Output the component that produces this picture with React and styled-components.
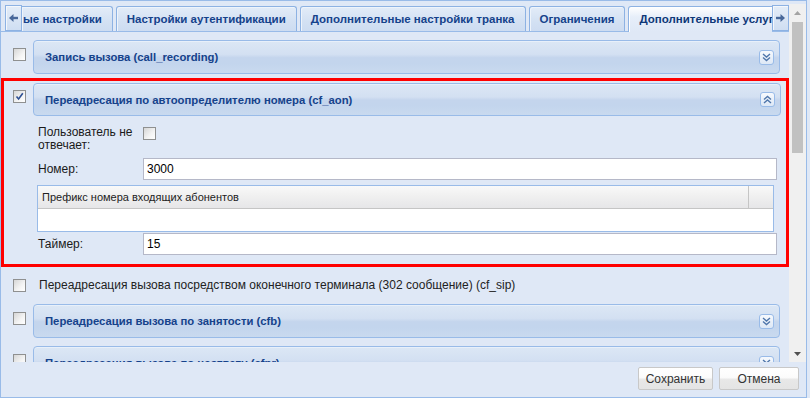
import React from 'react';
import styled, { createGlobalStyle } from 'styled-components';

const GlobalStyle = createGlobalStyle`
  html, body { margin: 0; padding: 0; background: #dfe8f6; }
  body { font-family: "Liberation Sans", Arial, sans-serif; font-size: 12px; }
  #root { width: 810px; height: 398px; overflow: hidden; }
`;

const Window = styled.div`
  box-sizing: border-box;
  width: 807px;
  height: 398px;
  border: 1px solid #99bbe8;
  background: #dfe8f6;
  display: flex;
  flex-direction: column;
  overflow: hidden;
`;

const ScrollArea = styled.div`
  margin-top: 3px;
  height: 358px;
  display: flex;
  flex-shrink: 0;
`;

const Content = styled.div`
  flex: 1;
  min-width: 0;
  display: flex;
  flex-direction: column;
  overflow: hidden;
`;

const TabStrip = styled.div`
  height: 28px;
  flex-shrink: 0;
  display: flex;
  align-items: flex-end;
  padding-left: 4px;
  background: linear-gradient(#99bbe8, #99bbe8) left bottom / 100% 1px no-repeat;
`;

const Scroller = styled.div`
  box-sizing: border-box;
  width: 17px;
  height: 26px;
  margin-bottom: 1px;
  flex-shrink: 0;
  border: 1px solid #8db2e3;
  background: linear-gradient(#e4edf8, #cfdef2);
  box-shadow: inset 1px 1px 0 #f3f7fc;
  display: flex;
  align-items: center;
  justify-content: center;
`;

const TabViewport = styled.div`
  flex: 1;
  align-self: stretch;
  min-width: 0;
  display: flex;
  align-items: flex-end;
  gap: 3px;
  overflow: hidden;
`;

const Tab = styled.div`
  box-sizing: border-box;
  flex-shrink: 0;
  height: ${(p) => (p.$active ? 26 : 25)}px;
  margin-bottom: ${(p) => (p.$active ? 0 : 1)}px;
  padding: 0 10px 0 ${(p) => (p.$clipped ? 1 : 10)}px;
  border: 1px solid #8db2e3;
  border-bottom: none;
  border-left: ${(p) => (p.$clipped ? 'none' : '1px solid #8db2e3')};
  border-radius: ${(p) => (p.$clipped ? '0 3px 0 0' : '3px 3px 0 0')};
  background: ${(p) =>
    p.$active
      ? 'linear-gradient(#ffffff, #e6eef9 40%, #dfe8f6)'
      : 'linear-gradient(#e3ecf8, #d3e1f3 60%, #cddcf1)'};
  box-shadow: inset 1px 1px 0 ${(p) => (p.$active ? '#ffffff' : '#eef4fb')};
  font-weight: bold;
  font-size: 11.5px;
  line-height: 24px;
  color: ${(p) => (p.$active ? '#0f3878' : '#15428b')};
  white-space: nowrap;
`;

const List = styled.div`
  display: flex;
  flex-direction: column;
  padding-top: 8px;
`;

const Row = styled.div`
  display: flex;
  align-items: flex-start;
  padding: 0 9px 0 12px;
  margin-top: ${(p) => p.$mt || 0}px;
`;

const Highlight = styled.div`
  margin-top: 4px;
  border: 3px solid #ff0000;
  padding: 2px 5px 9px 9px;
  display: flex;
  align-items: flex-start;
`;

const CheckBox = styled.span`
  box-sizing: border-box;
  flex-shrink: 0;
  width: 13px;
  height: 13px;
  margin-top: ${(p) => p.$mt || 0}px;
  margin-right: ${(p) => p.$mr || 0}px;
  border: 1px solid #8f9090;
  background: linear-gradient(135deg, #d6d6d6, #f4f4f4 60%, #ffffff);
  display: flex;
  align-items: center;
  justify-content: center;
`;

const Column = styled.div`
  flex: 1;
  min-width: 0;
  display: flex;
  flex-direction: column;
`;

const PanelHeader = styled.div`
  box-sizing: border-box;
  flex: 1 0 auto;
  height: ${(p) => p.$h || 34}px;
  border: 1px solid #99bbe8;
  border-radius: 4px;
  padding: 0 5px 0 11px;
  display: flex;
  align-items: center;
  justify-content: space-between;
  background: linear-gradient(#dce7f5 0%, #d3e0f2 42%, #c4d5ed 52%, #c3d5ed 70%, #c9daef 100%);
  box-shadow: inset 0 1px 0 #e8f0fa;
`;

const PanelTitle = styled.span`
  font-weight: bold;
  font-size: 11.3px;
  color: #15428b;
  white-space: nowrap;
`;

const ToggleButton = styled.span`
  box-sizing: border-box;
  width: 15px;
  height: 15px;
  border: 1px solid #99bbe8;
  border-radius: 3px;
  background: linear-gradient(#f6f9fd, #dde8f6);
  display: flex;
  align-items: center;
  justify-content: center;
`;

const Form = styled.div`
  display: flex;
  flex-direction: column;
  padding: 10px 4px 0 5px;
`;

const FormRow = styled.div`
  display: flex;
  align-items: ${(p) => (p.$top ? 'flex-start' : 'center')};
  margin-top: ${(p) => p.$mt || 0}px;
`;

const Label = styled.div`
  width: 105px;
  flex-shrink: 0;
  font-size: 12px;
  line-height: 13px;
  color: #1a1a1a;
`;

const TextInput = styled.div`
  box-sizing: border-box;
  flex: 1;
  height: 22px;
  border: 1px solid #b5b8c8;
  background: #ffffff;
  padding: 0 3px;
  font-size: 12px;
  line-height: 20px;
  color: #000;
`;

const Grid = styled.div`
  margin: 5px 3px 0 -1px;
  border: 1px solid #99bbe8;
  background: #ffffff;
  display: flex;
  flex-direction: column;
`;

const GridHeader = styled.div`
  display: flex;
  height: 22px;
  border-bottom: 1px solid #c5c5c5;
  background: linear-gradient(#f9f9f9, #f1f1f1 40%, #e6e6e8);
`;

const HeaderCell = styled.div`
  flex: ${(p) => (p.$w ? `0 0 ${p.$w}px` : 1)};
  border-left: ${(p) => (p.$w ? '1px solid #c5c5c5' : 'none')};
  padding-left: 4px;
  font-size: 11px;
  line-height: 22px;
  color: #222;
  white-space: nowrap;
`;

const GridBody = styled.div`
  height: 22px;
`;

const PlainLabel = styled.span`
  font-size: 12px;
  line-height: 13px;
  color: #222;
  white-space: nowrap;
  margin-left: 13px;
`;

const ScrollBar = styled.div`
  width: 17px;
  flex-shrink: 0;
  background: #f0f0f0;
  display: flex;
  flex-direction: column;
`;

const ScrollArrow = styled.div`
  height: 17px;
  display: flex;
  align-items: center;
  justify-content: center;
`;

const ScrollTrack = styled.div`
  flex: 1;
  padding: 1px 3px 0 3px;
`;

const Thumb = styled.div`
  height: 131px;
  background: #c1c1c1;
`;

const Toolbar = styled.div`
  flex: 1;
  display: flex;
  justify-content: flex-end;
  align-items: flex-start;
  gap: 6px;
  padding: 5px 7px 0 0;
`;

const Button = styled.button`
  box-sizing: border-box;
  width: ${(p) => p.$w}px;
  height: 23px;
  border: 1px solid #c8c8c8;
  border-radius: 2px;
  background: linear-gradient(#ffffff 0%, #fbfbfb 45%, #e8e8e8 55%, #e4e4e4 100%);
  font-family: "Liberation Sans", Arial, sans-serif;
  font-size: 12px;
  color: #333;
  padding: 0;
`;

const DoubleChevron = ({ up }) => (
  <svg width="9" height="9" viewBox="0 0 9 9">
    <g fill="none" stroke="#4f76ab" strokeWidth="1.4" transform={up ? 'rotate(180 4.5 4.5)' : undefined}>
      <path d="M1 1 L4.5 4 L8 1" />
      <path d="M1 4.5 L4.5 7.5 L8 4.5" />
    </g>
  </svg>
);

const TabArrow = ({ right }) => (
  <svg width="9" height="8" viewBox="0 0 9 8">
    <g fill="#48689a" transform={right ? 'rotate(180 4.5 4)' : undefined}>
      <polygon points="0,4 4.5,0 4.5,8" />
      <rect x="4" y="2.8" width="5" height="2.4" />
    </g>
  </svg>
);

const Check = () => (
  <svg width="9" height="9" viewBox="0 0 9 9">
    <path d="M1.5 4.5 L3.6 7 L7.8 1.2" fill="none" stroke="#2d4f93" strokeWidth="1.6" />
  </svg>
);

const Tri = ({ down, color }) => (
  <svg width="7" height="4" viewBox="0 0 7 4">
    <polygon points={down ? '0,0 7,0 3.5,4' : '0,4 7,4 3.5,0'} fill={color} />
  </svg>
);

const Box = ({ checked, mt, mr }) => (
  <CheckBox $mt={mt} $mr={mr}>{checked && <Check />}</CheckBox>
);

const Panel = ({ title, expanded, h }) => (
  <PanelHeader $h={h}>
    <PanelTitle>{title}</PanelTitle>
    <ToggleButton>
      <DoubleChevron up={expanded} />
    </ToggleButton>
  </PanelHeader>
);

export default function App() {
  return (
    <>
      <GlobalStyle />
      <Window>
        <ScrollArea>
          <Content>
            <TabStrip>
              <Scroller>
                <TabArrow />
              </Scroller>
              <TabViewport>
                <Tab $clipped>ые настройки</Tab>
                <Tab>Настройки аутентификации</Tab>
                <Tab>Дополнительные настройки транка</Tab>
                <Tab>Ограничения</Tab>
                <Tab $active>Дополнительные услуги</Tab>
              </TabViewport>
              <Scroller>
                <TabArrow right />
              </Scroller>
            </TabStrip>
            <List>
              <Row>
                <Box mt={8} mr={7} />
                <Panel title="Запись вызова (call_recording)" />
              </Row>
              <Highlight>
                <Box checked mt={7} mr={7} />
                <Column>
                  <Panel title="Переадресация по автоопределителю номера (cf_aon)" expanded h={33} />
                  <Form>
                    <FormRow $top>
                      <Label>
                        Пользователь не
                        <br />
                        отвечает:
                      </Label>
                      <Box mt={1} />
                    </FormRow>
                    <FormRow $mt={6}>
                      <Label>Номер:</Label>
                      <TextInput>3000</TextInput>
                    </FormRow>
                    <Grid>
                      <GridHeader>
                        <HeaderCell>Префикс номера входящих абонентов</HeaderCell>
                        <HeaderCell $w={20} />
                      </GridHeader>
                      <GridBody />
                    </Grid>
                    <FormRow $mt={1}>
                      <Label>Таймер:</Label>
                      <TextInput>15</TextInput>
                    </FormRow>
                  </Form>
                </Column>
              </Highlight>
              <Row $mt={12}>
                <Box />
                <PlainLabel>
                  Переадресация вызова посредством оконечного терминала (302 сообщение) (cf_sip)
                </PlainLabel>
              </Row>
              <Row $mt={12}>
                <Box mt={8} mr={7} />
                <Panel title="Переадресация вызова по занятости (cfb)" />
              </Row>
              <Row $mt={8}>
                <Box mt={8} mr={7} />
                <Panel title="Переадресация вызова по неответу (cfnr)" />
              </Row>
            </List>
          </Content>
          <ScrollBar>
            <ScrollArrow>
              <Tri color="#a3a3a3" />
            </ScrollArrow>
            <ScrollTrack>
              <Thumb />
            </ScrollTrack>
            <ScrollArrow>
              <Tri down color="#505050" />
            </ScrollArrow>
          </ScrollBar>
        </ScrollArea>
        <Toolbar>
          <Button $w={75}>Сохранить</Button>
          <Button $w={80}>Отмена</Button>
        </Toolbar>
      </Window>
    </>
  );
}
